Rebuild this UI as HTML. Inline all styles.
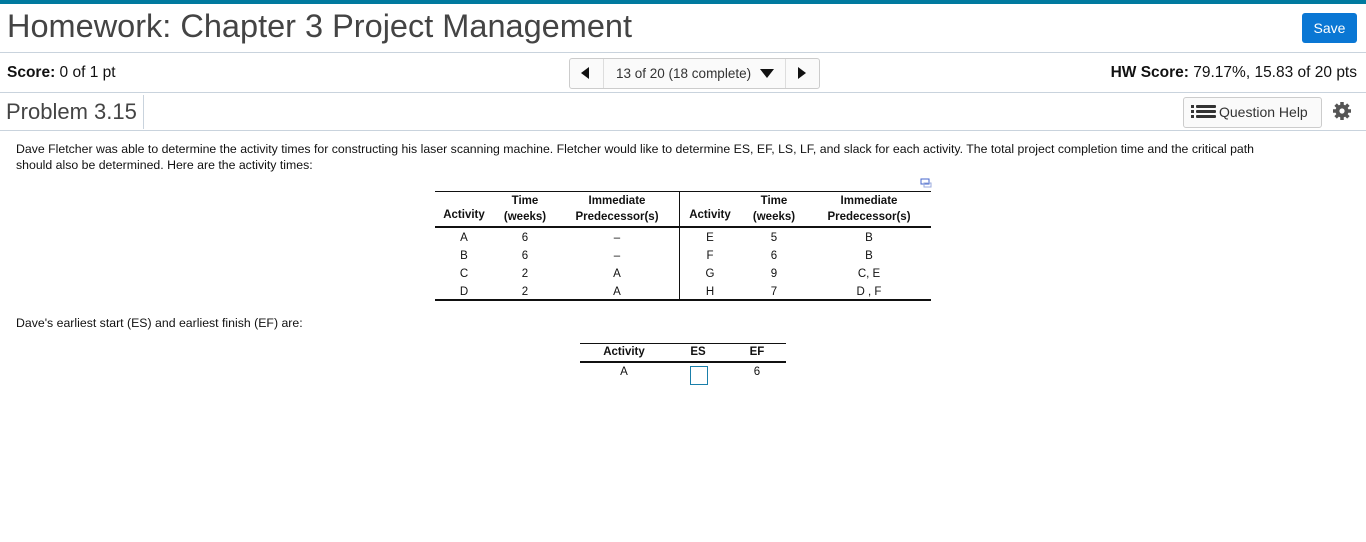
<!DOCTYPE html>
<html><head><style>
body{margin:0;width:1366px;height:542px;background:#fff;font-family:"Liberation Sans",Arial,sans-serif;color:#222;position:relative;overflow:hidden}
.a{position:absolute}
.hl{position:absolute;left:0;width:1366px;height:1px;background:#c9d3dd}
</style></head><body>
<div class="a" style="left:0;top:0;width:1366px;height:4px;background:#007a9f"></div>
<div class="a" style="left:7px;top:8px;font-size:32.5px;color:#444">Homework: Chapter 3 Project Management</div>
<div class="a" style="left:1302px;top:13px;width:55px;height:30px;background:#0a77d4;border-radius:3px;color:#fff;font-size:14px;line-height:30px;text-align:center">Save</div>
<div class="hl" style="top:52px"></div>
<div class="a" style="left:7px;top:64px;font-size:15.5px;color:#111"><b>Score:</b> 0 of 1 pt</div>
<div class="a" style="left:569px;top:58px;width:249px;height:29px;border:1px solid #ccc;border-radius:3px;background:#fafafa"></div>
<div class="a" style="left:603px;top:59px;width:1px;height:29px;background:#ddd"></div>
<div class="a" style="left:785px;top:59px;width:1px;height:29px;background:#ddd"></div>
<div class="a" style="left:581px;top:67px;width:0;height:0;border-top:6px solid transparent;border-bottom:6px solid transparent;border-right:8px solid #111"></div>
<div class="a" style="left:798px;top:67px;width:0;height:0;border-top:6px solid transparent;border-bottom:6px solid transparent;border-left:8px solid #111"></div>
<div class="a" style="left:616px;top:66px;font-size:13.5px;color:#333">13 of 20 (18 complete)</div>
<div class="a" style="left:760px;top:69px;width:0;height:0;border-left:7px solid transparent;border-right:7px solid transparent;border-top:9px solid #111"></div>
<div class="a" style="right:9px;top:64px;font-size:15.5px;color:#111"><b>HW Score:</b> 79.17%, 15.83 of 20 pts</div>
<div class="hl" style="top:92px"></div>
<div class="a" style="left:6px;top:99px;font-size:22px;color:#444">Problem 3.15</div>
<div class="a" style="left:143px;top:95px;width:1px;height:34px;background:#c9d3dd"></div>
<div class="a" style="left:1183px;top:97px;width:137px;height:29px;border:1px solid #ccc;border-radius:3px;background:#fafafa"></div>
<svg class="a" style="left:1191px;top:105px" width="26" height="14"><g fill="#333"><rect x="0" y="0" width="3" height="3"/><rect x="0" y="5" width="3" height="3"/><rect x="0" y="10" width="3" height="3"/><rect x="5" y="0" width="20" height="3" rx="1"/><rect x="5" y="5" width="20" height="3" rx="1"/><rect x="5" y="10" width="20" height="3" rx="1"/></g></svg>
<div class="a" style="left:1219px;top:104px;font-size:14px;color:#333">Question Help</div>
<svg class="a" style="left:1332px;top:101px" width="20" height="20" viewBox="0 0 20 20"><g fill="#555"><circle cx="10" cy="10" r="6.5"/><g stroke="#555" stroke-width="3.5"><line x1="10" y1="1" x2="10" y2="19"/><line x1="1" y1="10" x2="19" y2="10"/><line x1="3.6" y1="3.6" x2="16.4" y2="16.4"/><line x1="16.4" y1="3.6" x2="3.6" y2="16.4"/></g></g><circle cx="10" cy="10" r="2.6" fill="#fff"/></svg>
<div class="hl" style="top:130px"></div>
<div class="a" style="left:16px;top:141px;font-size:12.3px;line-height:16px;color:#111;width:1262px">Dave Fletcher was able to determine the activity times for constructing his laser scanning machine. Fletcher would like to determine ES, EF, LS, LF, and slack for each activity. The total project completion time and the critical path should also be determined. Here are the activity times:</div>
<svg class="a" style="left:920px;top:178px" width="12" height="10"><rect x="1" y="1" width="8" height="5" fill="none" stroke="#4466cc"/><rect x="4" y="5" width="7" height="4" fill="none" stroke="#99aadd"/></svg>
<div class="a" style="left:435px;top:191px;width:496px;height:1px;background:#111"></div>
<div class="a" style="left:435px;top:226px;width:496px;height:2px;background:#111"></div>
<div class="a" style="left:435px;top:299px;width:496px;height:2px;background:#111"></div>
<div class="a" style="left:679px;top:191px;width:1px;height:109px;background:#111"></div>
<div class="a" style="left:435px;top:193px;width:496px;font-size:11.5px;color:#111">
<div class="a" style="left:0;width:58px;top:16px;text-align:center;font-weight:bold">Activity</div>
<div class="a" style="left:64px;width:52px;top:0;text-align:center;font-weight:bold;line-height:16px">Time<br>(weeks)</div>
<div class="a" style="left:130px;width:104px;top:0;text-align:center;font-weight:bold;line-height:16px">Immediate<br>Predecessor(s)</div>
<div class="a" style="left:246px;width:58px;top:16px;text-align:center;font-weight:bold">Activity</div>
<div class="a" style="left:312px;width:54px;top:0;text-align:center;font-weight:bold;line-height:16px">Time<br>(weeks)</div>
<div class="a" style="left:380px;width:108px;top:0;text-align:center;font-weight:bold;line-height:16px">Immediate<br>Predecessor(s)</div>
</div>
<div class="a" style="left:435px;top:229px;font-size:11.5px;color:#111;line-height:18px">
<div class="a" style="left:0;width:58px;text-align:center">A<br>B<br>C<br>D</div>
<div class="a" style="left:64px;width:52px;text-align:center">6<br>6<br>2<br>2</div>
<div class="a" style="left:130px;width:104px;text-align:center">–<br>–<br>A<br>A</div>
<div class="a" style="left:246px;width:58px;text-align:center">E<br>F<br>G<br>H</div>
<div class="a" style="left:312px;width:54px;text-align:center">5<br>6<br>9<br>7</div>
<div class="a" style="left:380px;width:108px;text-align:center">B<br>B<br>C, E<br>D , F</div>
</div>
<div class="a" style="left:16px;top:316px;font-size:12.3px;color:#111">Dave's earliest start (ES) and earliest finish (EF) are:</div>
<div class="a" style="left:580px;top:343px;width:206px;height:1px;background:#111"></div>
<div class="a" style="left:580px;top:361px;width:206px;height:2px;background:#111"></div>
<div class="a" style="left:580px;top:346px;font-size:11.5px;font-weight:bold;color:#111">
<div class="a" style="left:0;width:88px;text-align:center">Activity</div>
<div class="a" style="left:98px;width:40px;text-align:center">ES</div>
<div class="a" style="left:158px;width:38px;text-align:center">EF</div>
</div>
<div class="a" style="left:580px;top:366px;font-size:11.5px;color:#111">
<div class="a" style="left:0;width:88px;text-align:center">A</div>
<div class="a" style="left:158px;width:38px;text-align:center">6</div>
</div>
<div class="a" style="left:690px;top:366px;width:16px;height:17px;border:1px solid #1a7faa"></div>
</body></html>
